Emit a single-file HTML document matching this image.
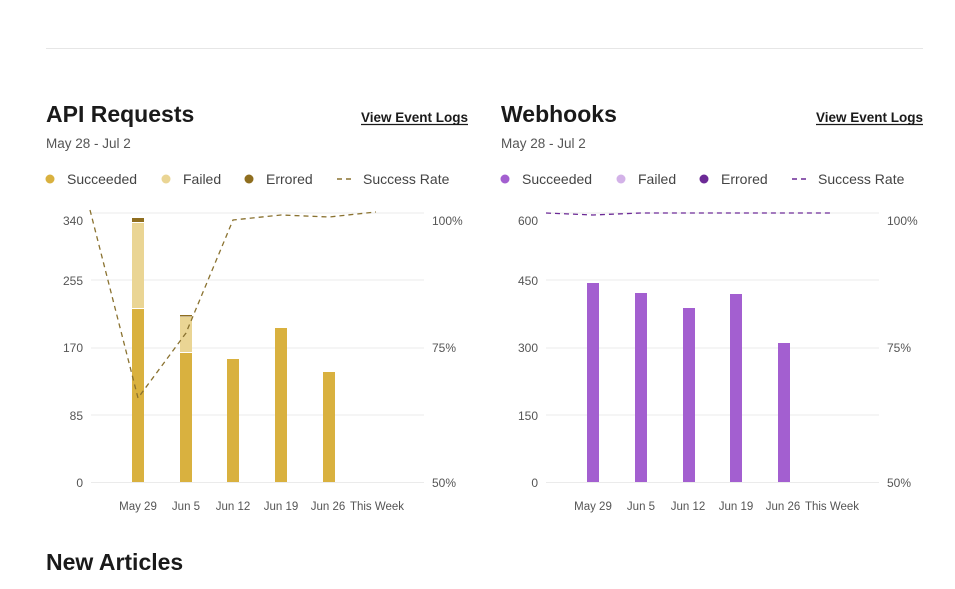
<!DOCTYPE html>
<html><head><meta charset="utf-8"><style>
html,body{margin:0;padding:0;background:#fff;width:955px;height:589px;overflow:hidden}
svg{display:block;font-family:"Liberation Sans",sans-serif}
</style></head><body>
<svg width="955" height="589" viewBox="0 0 955 589">
<line x1="46" y1="48.5" x2="923" y2="48.5" stroke="#e6e6e6"/>
<!-- API -->
<text x="46" y="122" font-size="23" font-weight="bold" fill="#1a1a1a">API Requests</text>
<text x="468" y="122" font-size="13.5" font-weight="bold" fill="#1a1a1a" text-anchor="end">View Event Logs</text>
<line x1="361" y1="124.5" x2="468" y2="124.5" stroke="#1a1a1a" stroke-width="1.2"/>
<text x="46" y="148" font-size="13.5" fill="#555">May 28 - Jul 2</text>
<g font-size="14" fill="#444">
<circle cx="50" cy="179" r="4.5" fill="#d9b13f"/><text x="67" y="184">Succeeded</text>
<circle cx="166" cy="179" r="4.5" fill="#ead594"/><text x="183" y="184">Failed</text>
<circle cx="249" cy="179" r="4.5" fill="#8f6e1f"/><text x="266" y="184">Errored</text>
<line x1="337" y1="179" x2="355" y2="179" stroke="#8a7230" stroke-width="1.5" stroke-dasharray="5,4"/><text x="363" y="184">Success Rate</text>
</g>
<g stroke="#ebebeb"><line x1="91" y1="213" x2="424" y2="213"/><line x1="91" y1="280" x2="424" y2="280"/><line x1="91" y1="348" x2="424" y2="348"/><line x1="91" y1="415" x2="424" y2="415"/><line x1="91" y1="482.5" x2="424" y2="482.5"/></g>
<g font-size="12" fill="#555" text-anchor="end"><text x="83" y="225">340</text><text x="83" y="285">255</text><text x="83" y="352">170</text><text x="83" y="420">85</text><text x="83" y="487">0</text></g>
<g font-size="12" fill="#555"><text x="432" y="225">100%</text><text x="432" y="352">75%</text><text x="432" y="487">50%</text></g>
<g font-size="11.5" fill="#555" text-anchor="middle"><text x="138" y="510">May 29</text><text x="186" y="510">Jun 5</text><text x="233" y="510">Jun 12</text><text x="281" y="510">Jun 19</text><text x="328" y="510">Jun 26</text><text x="377" y="510">This Week</text></g>
<rect x="132" y="309" width="12" height="173" fill="#d9b13f"/><rect x="132" y="223" width="12" height="85" fill="#ead594"/><rect x="132" y="218" width="12" height="4" fill="#8f6e1f"/>
<rect x="180" y="353" width="12" height="129" fill="#d9b13f"/><rect x="180" y="317" width="12" height="35" fill="#ead594"/><rect x="180" y="315" width="12" height="1.5" fill="#8f6e1f"/>
<rect x="227" y="359" width="12" height="123" fill="#d9b13f"/>
<rect x="275" y="328" width="12" height="154" fill="#d9b13f"/>
<rect x="323" y="372" width="12" height="110" fill="#d9b13f"/>
<polyline points="90,210 138,398 186,333 233,220 281,215 329,217 376,212" fill="none" stroke="#8a7230" stroke-width="1.3" stroke-dasharray="5,4"/>
<!-- Webhooks -->
<text x="501" y="122" font-size="23" font-weight="bold" fill="#1a1a1a">Webhooks</text>
<text x="923" y="122" font-size="13.5" font-weight="bold" fill="#1a1a1a" text-anchor="end">View Event Logs</text>
<line x1="816" y1="124.5" x2="923" y2="124.5" stroke="#1a1a1a" stroke-width="1.2"/>
<text x="501" y="148" font-size="13.5" fill="#555">May 28 - Jul 2</text>
<g font-size="14" fill="#444">
<circle cx="505" cy="179" r="4.5" fill="#a35fd0"/><text x="522" y="184">Succeeded</text>
<circle cx="621" cy="179" r="4.5" fill="#d3b2e8"/><text x="638" y="184">Failed</text>
<circle cx="704" cy="179" r="4.5" fill="#6c2a96"/><text x="721" y="184">Errored</text>
<line x1="792" y1="179" x2="810" y2="179" stroke="#6c2a96" stroke-width="1.5" stroke-dasharray="5,4"/><text x="818" y="184">Success Rate</text>
</g>
<g stroke="#ebebeb"><line x1="546" y1="213" x2="879" y2="213"/><line x1="546" y1="280" x2="879" y2="280"/><line x1="546" y1="348" x2="879" y2="348"/><line x1="546" y1="415" x2="879" y2="415"/><line x1="546" y1="482.5" x2="879" y2="482.5"/></g>
<g font-size="12" fill="#555" text-anchor="end"><text x="538" y="225">600</text><text x="538" y="285">450</text><text x="538" y="352">300</text><text x="538" y="420">150</text><text x="538" y="487">0</text></g>
<g font-size="12" fill="#555"><text x="887" y="225">100%</text><text x="887" y="352">75%</text><text x="887" y="487">50%</text></g>
<g font-size="11.5" fill="#555" text-anchor="middle"><text x="593" y="510">May 29</text><text x="641" y="510">Jun 5</text><text x="688" y="510">Jun 12</text><text x="736" y="510">Jun 19</text><text x="783" y="510">Jun 26</text><text x="832" y="510">This Week</text></g>
<rect x="587" y="283" width="12" height="199" fill="#a35fd0"/>
<rect x="635" y="293" width="12" height="189" fill="#a35fd0"/>
<rect x="683" y="308" width="12" height="174" fill="#a35fd0"/>
<rect x="730" y="294" width="12" height="188" fill="#a35fd0"/>
<rect x="778" y="343" width="12" height="139" fill="#a35fd0"/>
<polyline points="546,213 593,215 641,213 688,213 736,213 784,213 831,213" fill="none" stroke="#6c2a96" stroke-width="1.3" stroke-dasharray="5,4"/>
<text x="46" y="570" font-size="23" font-weight="bold" fill="#1a1a1a">New Articles</text>
</svg>
</body></html>
